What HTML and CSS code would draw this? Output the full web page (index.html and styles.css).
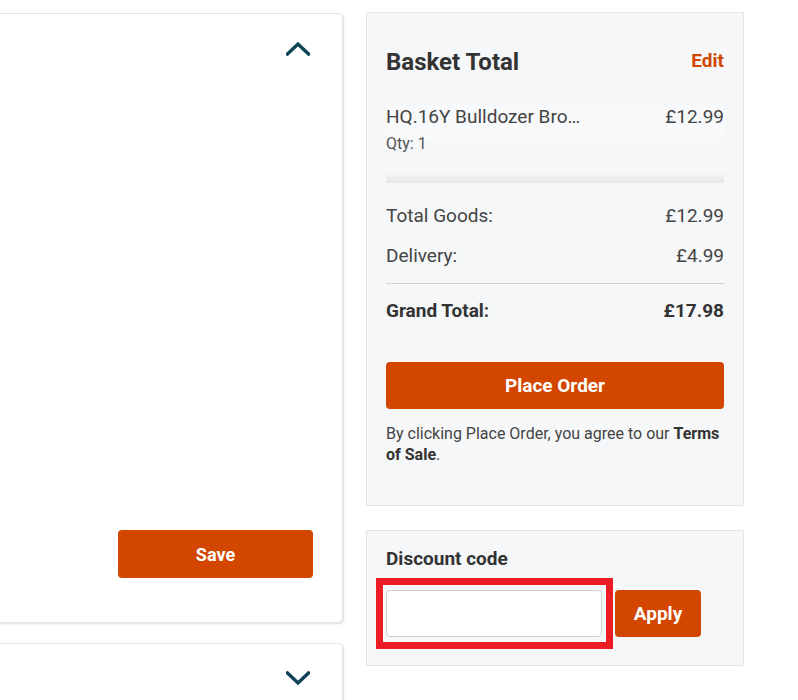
FILE: index.html
```html
<!DOCTYPE html>
<html lang="en">
<head>
<meta charset="utf-8">
<title>Checkout</title>
<link rel="stylesheet" href="styles.css">
</head>
<body>
<div class="page">
  <div class="left-col">
    <section class="card card-open">
      <div class="card-head">
        <button class="chevron" aria-label="Collapse">
          <svg width="24" height="15" viewBox="0 0 24 15"><polyline points="1.5,13 12,3 22.5,13" fill="none" stroke="#0f4457" stroke-width="3.4" stroke-linecap="square"/></svg>
        </button>
      </div>
      <div class="card-body"></div>
      <div class="card-foot">
        <button class="btn btn-save">Save</button>
      </div>
    </section>
    <section class="card card-closed">
      <div class="card-head">
        <button class="chevron" aria-label="Expand">
          <svg width="24" height="15" viewBox="0 0 24 15"><polyline points="1.5,2 12,12 22.5,2" fill="none" stroke="#0f4457" stroke-width="3.4" stroke-linecap="square"/></svg>
        </button>
      </div>
    </section>
  </div>
  <aside class="right-col">
    <div class="panel basket">
      <div class="basket-head">
        <h2 class="basket-title">Basket Total</h2>
        <a class="edit-link">Edit</a>
      </div>
      <div class="items">
        <div class="item-row">
          <span class="item-name">HQ.16Y Bulldozer Bro…</span>
          <span class="item-price">£12.99</span>
        </div>
        <div class="item-qty">Qty: 1</div>
      </div>
      <div class="sum-row first"><span>Total Goods:</span><span>£12.99</span></div>
      <div class="sum-row"><span>Delivery:</span><span>£4.99</span></div>
      <div class="divider"></div>
      <div class="sum-row grand"><span>Grand Total:</span><span>£17.98</span></div>
      <button class="btn btn-order">Place Order</button>
      <p class="terms">By clicking Place Order, you agree to our <strong>Terms of Sale</strong>.</p>
    </div>
    <div class="panel discount">
      <div class="discount-label">Discount code</div>
      <div class="discount-row">
        <div class="input-wrap">
          <input class="discount-input" type="text">
          <span class="highlight"></span>
        </div>
        <button class="btn btn-apply">Apply</button>
      </div>
    </div>
  </aside>
</div>
</body>
</html>
```

FILE: styles.css
```css
html, body {
  margin: 0;
  padding: 0;
  background: #ffffff;
  font-family: Roboto, "Liberation Sans", Arial, sans-serif;
  color: #3a3a3a;
  overflow: hidden;
}

.page {
  display: flex;
  align-items: flex-start;
  gap: 23px;
  margin-left: -77px;
}

.left-col {
  width: 420px;
  flex: none;
  display: flex;
  flex-direction: column;
  gap: 20px;
  padding-top: 13px;
}

.card {
  background: #fff;
  border: 1px solid #e4e4e4;
  border-radius: 5px;
  box-shadow: 1px 1px 2px rgba(0, 0, 0, 0.12);
  padding: 27px 32px 44px 30px;
}

.card-head {
  display: flex;
  justify-content: flex-end;
  height: 15px;
}

.chevron {
  border: 0;
  background: none;
  padding: 0;
  margin: 0;
  display: block;
  line-height: 0;
}

.card-body {
  height: 474px;
}

.card-foot {
  display: flex;
  justify-content: flex-end;
}

.btn {
  border: 0;
  background: #d24600;
  color: #fff;
  font-family: Roboto, "Liberation Sans", Arial, sans-serif;
  font-weight: 700;
  border-radius: 4px;
  cursor: pointer;
}

.btn-save {
  width: 195px;
  height: 48px;
  font-size: 18px;
  margin-right: -3px;
}

.card-closed {
  height: 200px;
}

.right-col {
  width: 378px;
  flex: none;
  padding-top: 12px;
  display: flex;
  flex-direction: column;
  gap: 24px;
}

.panel {
  background: #f6f7f9;
  border: 1px solid #e3e5e8;
  padding: 0 19px;
}

.basket {
  padding-top: 34px;
  padding-bottom: 40px;
}

.basket-head {
  display: flex;
  justify-content: space-between;
  align-items: center;
  height: 30px;
}

.basket-title {
  margin: 0;
  font-size: 24px;
  font-weight: 700;
  color: #333;
  line-height: 30px;
}

.edit-link {
  color: #d24600;
  font-weight: 700;
  font-size: 19px;
  line-height: 30px;
  margin-top: -3px;
}

.items {
  margin-top: 28px;
  padding-bottom: 29px;
  background: linear-gradient(to bottom, rgba(255, 255, 255, 0.25) 0, rgba(255, 255, 255, 0.25) 36px, rgba(0, 0, 0, 0) 36px, rgba(0, 0, 0, 0) 67px, rgba(0, 0, 0, 0.07) 78px);
}

.item-row {
  display: flex;
  justify-content: space-between;
  font-size: 19px;
  line-height: 24px;
  color: #444;
}

.item-qty {
  margin-top: 5px;
  font-size: 16px;
  line-height: 20px;
  color: #555;
}

.sum-row {
  display: flex;
  justify-content: space-between;
  font-size: 19px;
  line-height: 24px;
  margin-top: 16px;
  color: #444;
}

.sum-row.first {
  margin-top: 21px;
}

.divider {
  margin-top: 15px;
  height: 1px;
  background: #cfd1d4;
}

.sum-row.grand {
  margin-top: 15px;
  font-weight: 700;
  color: #333;
}

.btn-order {
  display: block;
  width: 100%;
  height: 47px;
  margin-top: 39px;
  font-size: 19px;
}

.terms {
  margin: 14px 0 0;
  font-size: 16px;
  line-height: 21px;
  color: #444;
}

.terms strong {
  color: #333;
}

.discount {
  padding-top: 16px;
  padding-bottom: 28px;
}

.discount-label {
  font-size: 19px;
  font-weight: 700;
  line-height: 24px;
  color: #333;
}

.discount-row {
  margin-top: 19px;
  display: flex;
  gap: 13px;
}

.input-wrap {
  position: relative;
  width: 216px;
  height: 47px;
}

.discount-input {
  box-sizing: border-box;
  width: 100%;
  height: 100%;
  margin: 0;
  border: 1px solid #cfcfcf;
  border-radius: 4px;
  background: #fff;
  font-family: Roboto, "Liberation Sans", Arial, sans-serif;
  font-size: 16px;
}

.highlight {
  position: absolute;
  left: -10px;
  top: -12px;
  right: -11px;
  bottom: -12px;
  border: 7px solid #ec1c24;
  pointer-events: none;
}

.btn-apply {
  width: 86px;
  height: 47px;
  font-size: 19px;
}
```
